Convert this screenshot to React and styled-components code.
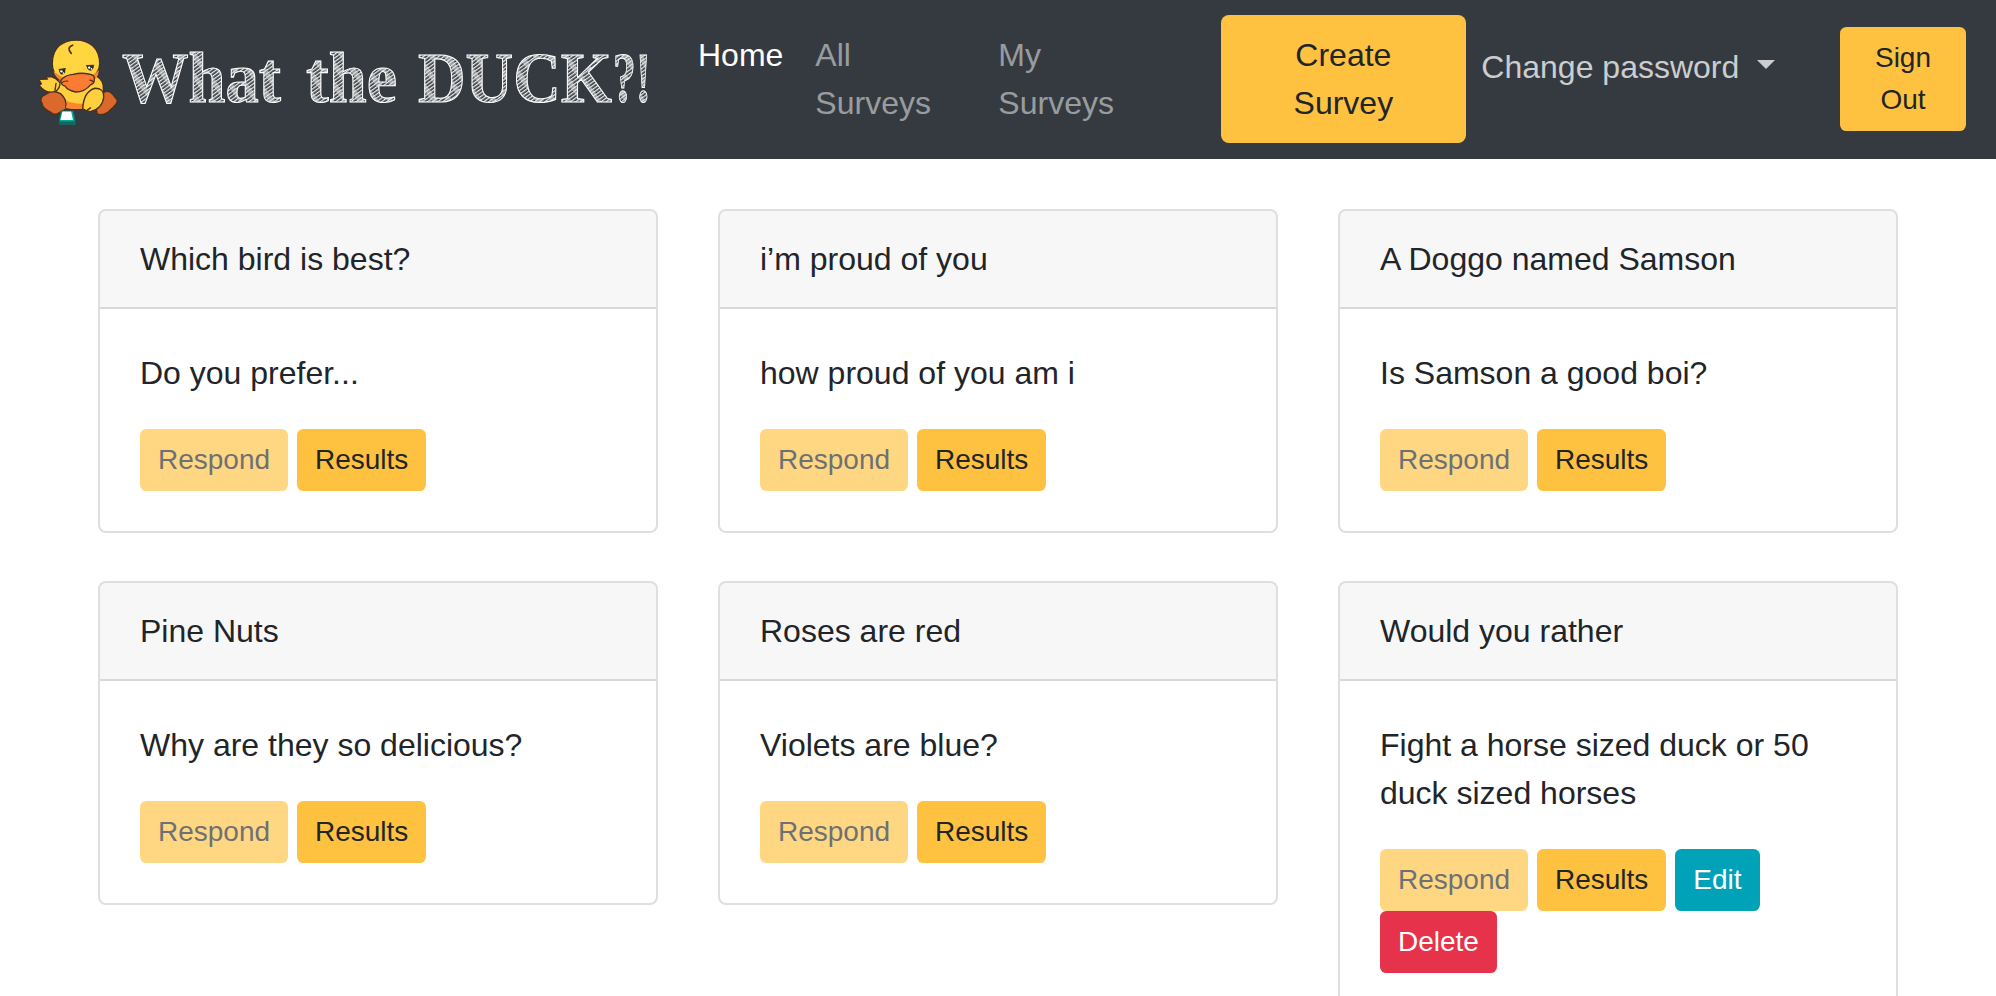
import React from 'react';
import styled, { createGlobalStyle, css } from 'styled-components';

const GlobalStyle = createGlobalStyle`
  *, *::before, *::after { box-sizing: border-box; }
  html, body { height: 100%; overflow: hidden; }
  body {
    margin: 0;
    background: #fff;
    color: #212529;
    font: 400 32px/1.5 "Liberation Sans", Arial, sans-serif;
  }
`;

const Navbar = styled.nav`
  display: flex;
  align-items: flex-start;
  height: 159px;
  padding: 15px 30px 0 36px;
  background: #343a40;
`;

const Brand = styled.a`
  display: flex;
  flex: none;
  align-items: flex-start;
  width: 646px;
  padding-top: 15px;
`;

const DuckArt = styled.svg`
  flex: none;
  width: 84px;
  height: 90px;
  margin-top: 8px;
`;

const Wordmark = styled.svg`
  flex: none;
  width: 546px;
  height: 100px;
  margin-right: -20px;
  font: 700 71px "Liberation Serif", "Times New Roman", serif;
`;

const NavLinks = styled.div`
  display: flex;
  flex: none;
  align-items: flex-start;
  margin-right: 56.5px;
`;

const NavLink = styled.a`
  width: ${({ $width }) => $width};
  padding: 16px;
  color: ${({ $active }) => ($active ? '#fff' : 'rgba(255, 255, 255, 0.5)')};
`;

const CreateButton = styled.button`
  flex: none;
  width: 245px;
  padding: 16px 22px;
  border: 0;
  border-radius: 8px;
  background: #ffc240;
  color: #212529;
  font: inherit;
  text-align: center;
`;

const DropdownToggle = styled.a`
  display: flex;
  flex: 1;
  margin-top: 12px;
  padding: 16px 16px 16px 15.5px;
  color: rgba(255, 255, 255, 0.75);
  white-space: nowrap;

  &::after {
    content: '';
    width: 0;
    height: 0;
    margin: 17px 0 0 17.8px;
    border: 9.6px solid transparent;
    border-top-color: currentColor;
    border-bottom: 0;
  }
`;

const variants = {
  warning: css`background: #ffc240; color: #212529;`,
  info: css`background: #00a2b8; color: #fff;`,
  danger: css`background: #e6324a; color: #fff;`,
};

const SmallButton = styled.button`
  display: inline-block;
  padding: 8px 16px;
  border: 2px solid transparent;
  border-radius: 6.4px;
  background-clip: border-box;
  font: 400 28px/1.5 "Liberation Sans", Arial, sans-serif;
  text-align: center;
  vertical-align: middle;
  ${({ $variant = 'warning' }) => variants[$variant]}

  &:disabled { opacity: 0.65; }
`;

const SignOutButton = styled(SmallButton)`
  flex: none;
  width: 126px;
  margin-top: 12px;
`;

const CardGrid = styled.main`
  display: grid;
  grid-template-columns: repeat(3, 560px);
  gap: 48px 60px;
  align-items: start;
  justify-content: center;
  padding: 50px 0;
`;

const Card = styled.article`
  border: 2px solid rgba(0, 0, 0, 0.125);
  border-radius: 8px;
  background: #fff;
`;

const CardHeader = styled.header`
  padding: 24px 40px;
  border-bottom: 2px solid rgba(0, 0, 0, 0.125);
  border-radius: 6px 6px 0 0;
  background: rgba(0, 0, 0, 0.03);
`;

const CardBody = styled.div`
  padding: 40px;
`;

const CardText = styled.p`
  margin: 0 0 32px;
`;

const Duck = () => (
  <DuckArt viewBox="50 56 248 265" aria-hidden="true">
    <g stroke="#49301f" strokeWidth="4" strokeLinejoin="round" strokeLinecap="round">
      <path d="M67 229L96 212Q122 214 130 226Q144 240 142 263L114 279Q101 284 95 276Q68 262 68 249L64 240Z" fill="#dc692c" />
      <path d="M250 216Q264 209 275 220L290 239Q290 250 279 259L262 275Q243 286 230 279L228 263L240 235Z" fill="#dc692c" />
      <path d="M112 180L226 166Q252 181 249 208Q253 249 214 261Q174 270 138 261Q142 236 123 220L102 212Z" fill="#ffd03d" />
      <path d="M138 262Q145 249 139 239Q153 251 190 250L187 265Q160 267 138 262Z" fill="#fb8630" stroke="none" />
      <path d="M109 176L96 170L78 170L84 177L58 178L66 191L60 196Q80 222 109 213Q121 203 121 188Z" fill="#ffd03d" />
      <path d="M109 190L106 211" fill="none" />
      <path d="M98 132Q98 96 119 78Q140 62 169 62Q198 62 218 79Q238 97 238 132Q237 157 216 171Q171 198 123 181Q98 162 98 132Z" fill="#ffd640" />
      <path d="M101 154Q110 177 130 185L210 190Q232 180 236 150Q224 164 200 170L129 172Z" fill="#fb8630" stroke="none" />
      <path d="M123 181Q135 165 159 163Q184 157 205 162Q226 164 222 179Q223 190 211 194Q194 215 167 215Q144 211 136 198Q124 195 123 181Z" fill="#fa7b32" />
      <path d="M127 187Q136 181 144 183M209 180Q216 180 220 186" fill="none" strokeWidth="3" />
      <path d="M158 77Q139 84 154 101" fill="none" strokeWidth="5" />
      <path d="M188 265Q190 214 224 204Q251 204 250 229Q247 263 211 273Q198 272 188 265Z" fill="#ffd03d" />
      <path d="M202 268L211 262" fill="none" />
    </g>
    <path d="M118 149L137 146L136 157Q132 166 123 163Q117 158 118 149Z" fill="#312923" />
    <path d="M199 137L221 136Q221 149 212 152Q201 151 199 137Z" fill="#312923" />
    <g fill="#fff">
      <circle cx="125" cy="154" r="3.5" />
      <circle cx="131" cy="159" r="2.5" />
      <circle cx="207" cy="143" r="3.5" />
      <circle cx="214" cy="147" r="2.5" />
    </g>
    <path d="M117 149L138 146M198 137L222 136" stroke="#49301f" strokeWidth="3" />
    <path d="M124 271H160L165 298V312L119 310V297Z" fill="#00a89a" stroke="#17645e" strokeWidth="3" />
    <path d="M128 273H154L159 298H122Z" fill="#fff" />
    <path d="M120 302H163V310H120Z" fill="#14655d" />
  </DuckArt>
);

const Logo = () => (
  <Brand>
    <Duck />
    <Wordmark viewBox="120 30 546 100">
      <defs>
        <pattern id="hatch" width="12" height="3" patternUnits="userSpaceOnUse" patternTransform="rotate(-36)">
          <path d="M0 0.7H12" stroke="#fff" strokeWidth="1.2" />
          <path d="M2 2.2H7" stroke="#fff" strokeWidth="0.8" />
        </pattern>
      </defs>
      <text y="102" fill="url(#hatch)" stroke="#fff" strokeWidth="1.1">
        <tspan x="122" textLength="159" lengthAdjust="spacingAndGlyphs">What</tspan>
        <tspan x="306" textLength="91" lengthAdjust="spacingAndGlyphs">the</tspan>
        <tspan x="418" textLength="194" lengthAdjust="spacingAndGlyphs">DUCK</tspan>
        <tspan x="613" textLength="38" lengthAdjust="spacingAndGlyphs">?!</tspan>
      </text>
    </Wordmark>
  </Brand>
);

const surveys = [
  { title: 'Which bird is best?', text: 'Do you prefer...' },
  { title: 'i’m proud of you', text: 'how proud of you am i' },
  { title: 'A Doggo named Samson', text: 'Is Samson a good boi?' },
  { title: 'Pine Nuts', text: 'Why are they so delicious?' },
  { title: 'Roses are red', text: 'Violets are blue?' },
  { title: 'Would you rather', text: 'Fight a horse sized duck or 50 duck sized horses', owned: true },
];

const SurveyCard = ({ title, text, owned }) => (
  <Card>
    <CardHeader>{title}</CardHeader>
    <CardBody>
      <CardText>{text}</CardText>
      <SmallButton disabled>Respond</SmallButton>{' '}
      <SmallButton>Results</SmallButton>
      {owned && (
        <>
          {' '}
          <SmallButton $variant="info">Edit</SmallButton>{' '}
          <SmallButton $variant="danger">Delete</SmallButton>
        </>
      )}
    </CardBody>
  </Card>
);

export default function App() {
  return (
    <>
      <GlobalStyle />
      <Navbar>
        <Logo />
        <NavLinks>
          <NavLink $active>Home</NavLink>
          <NavLink $width="183px">All Surveys</NavLink>
          <NavLink $width="182px">My Surveys</NavLink>
        </NavLinks>
        <CreateButton>Create Survey</CreateButton>
        <DropdownToggle>Change password</DropdownToggle>
        <SignOutButton>Sign Out</SignOutButton>
      </Navbar>
      <CardGrid>
        {surveys.map((survey) => (
          <SurveyCard key={survey.title} {...survey} />
        ))}
      </CardGrid>
    </>
  );
}
